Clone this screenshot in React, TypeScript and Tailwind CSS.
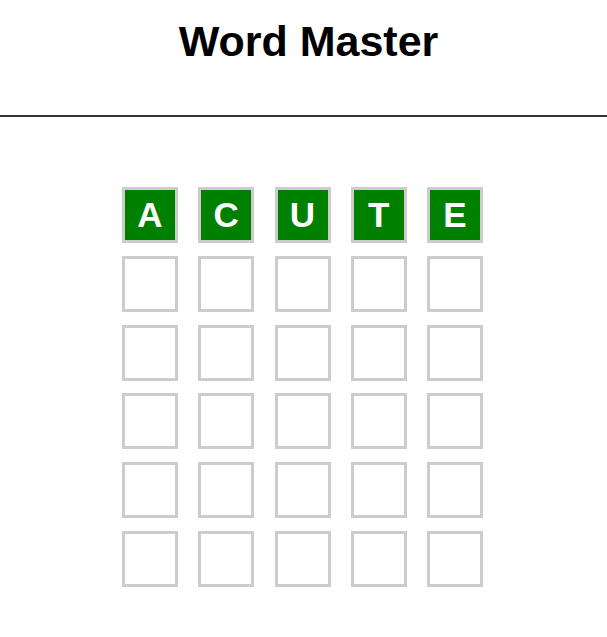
const guess = "ACUTE";
const rows = 6;

function Cell({ letter }: { letter?: string }) {
  return (
    <div
      className={
        letter
          ? "w-14 h-14 border-[3px] border-[#cccccc] bg-[#008000] flex items-center justify-center text-white font-bold text-[35px]"
          : "w-14 h-14 border-[3px] border-[#cccccc] bg-white"
      }
    >
      {letter}
    </div>
  );
}

export default function App() {
  return (
    <div className="min-h-screen bg-white font-['Liberation_Sans',Arial,sans-serif]">
      <header className="pt-[17px] pb-[50px] border-b-2 border-[#333333]">
        <h1 className="text-center pl-[10px] text-[43px] leading-[48px] font-bold text-black">
          Word Master
        </h1>
      </header>
      <div className="flex justify-center pt-[70px] pr-[2px]">
        <div className="grid grid-cols-5 gap-x-[20.25px] gap-y-[12.8px]">
          {Array.from({ length: rows }).map((_, r) =>
            guess.split("").map((ch, c) => (
              <Cell key={`${r}-${c}`} letter={r === 0 ? ch : undefined} />
            ))
          )}
        </div>
      </div>
    </div>
  );
}
